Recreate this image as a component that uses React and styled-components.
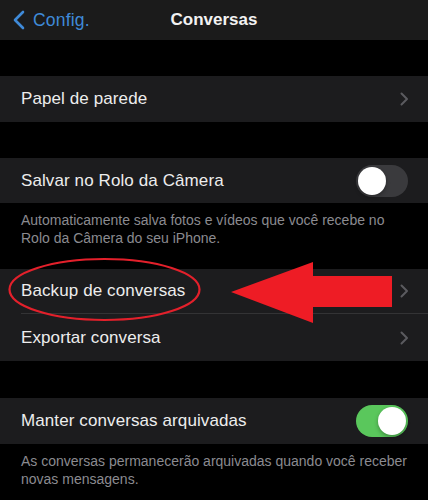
import React from "react";
import styled, { createGlobalStyle } from "styled-components";

const Global = createGlobalStyle`
  html, body { margin: 0; padding: 0; background: #000; }
  body { font-family: "Liberation Sans", Arial, sans-serif; -webkit-font-smoothing: antialiased; }
`;

const Page = styled.div`
  position: relative;
  width: 428px;
  height: 500px;
  overflow: hidden;
  background: #000;
`;

const NavBar = styled.div`
  height: 40px;
  background: #1b1b1b;
  display: grid;
  grid-template-columns: 1fr auto 1fr;
  align-items: center;
`;

const Back = styled.div`
  display: flex;
  align-items: center;
  gap: 8px;
  padding-left: 12px;
  color: #3f8ad8;
  font-size: 17.5px;
  letter-spacing: 0.2px;
`;

const Title = styled.div`
  color: #f2f2f2;
  font-size: 17px;
  font-weight: 700;
`;

const Gap = styled.div`
  height: ${(p) => p.$h}px;
`;

const Group = styled.div`
  background: #1c1c1e;
`;

const Row = styled.div`
  height: ${(p) => p.$h || 46}px;
  display: flex;
  align-items: center;
  justify-content: space-between;
  padding: 0 21px;
  color: #ededed;
  font-size: 17px;
  letter-spacing: 0.1px;
  box-sizing: border-box;
`;

const Separator = styled.div`
  height: 1px;
  margin-left: 21px;
  background: #333335;
`;

const Footer = styled.div`
  box-sizing: border-box;
  height: ${(p) => p.$h}px;
  padding: 9px 21px 0;
  color: #8b8b90;
  font-size: 14px;
  line-height: 17.5px;
`;

const Track = styled.div`
  width: 52px;
  height: 32px;
  border-radius: 16px;
  background: ${(p) => (p.$on ? "#5ac75c" : "#3a3a3d")};
  display: flex;
  align-items: center;
  justify-content: ${(p) => (p.$on ? "flex-end" : "flex-start")};
  padding: 2px;
  box-sizing: border-box;
  margin-right: -1px;
`;

const Knob = styled.div`
  width: 28px;
  height: 28px;
  border-radius: 50%;
  background: #fff;
  box-shadow: 0 2px 4px rgba(0, 0, 0, 0.3);
`;

const Overlay = styled.svg`
  position: absolute;
  left: 0;
  top: 0;
  pointer-events: none;
`;

const Chevron = () => (
  <svg width="9" height="14" viewBox="0 0 9 14" style={{ marginRight: -2 }}>
    <path d="M1.5 1.5 L7 7 L1.5 12.5" fill="none" stroke="#5b5b5f" strokeWidth="2" strokeLinecap="round" strokeLinejoin="round" />
  </svg>
);

const BackChevron = () => (
  <svg width="13" height="20" viewBox="0 0 13 20">
    <path d="M11 2 L3 10 L11 18" fill="none" stroke="#3f8ad8" strokeWidth="2.6" strokeLinecap="round" strokeLinejoin="round" />
  </svg>
);

const Toggle = ({ on }) => (
  <Track $on={on}>
    <Knob />
  </Track>
);

export default function App() {
  return (
    <Page>
      <Global />
      <NavBar>
        <Back>
          <BackChevron />
          <span>Config.</span>
        </Back>
        <Title>Conversas</Title>
        <div />
      </NavBar>
      <Gap $h={36} />
      <Group>
        <Row>
          <span>Papel de parede</span>
          <Chevron />
        </Row>
      </Group>
      <Gap $h={36} />
      <Group>
        <Row $h={45}>
          <span>Salvar no Rolo da Câmera</span>
          <Toggle on={false} />
        </Row>
      </Group>
      <Footer $h={66}>
        Automaticamente salva fotos e vídeos que você recebe no Rolo da Câmera do seu iPhone.
      </Footer>
      <Group>
        <Row $h={44}>
          <span>Backup de conversas</span>
          <Chevron />
        </Row>
        <Separator />
        <Row $h={47}>
          <span>Exportar conversa</span>
          <Chevron />
        </Row>
      </Group>
      <Gap $h={37} />
      <Group>
        <Row>
          <span>Manter conversas arquivadas</span>
          <Toggle on />
        </Row>
      </Group>
      <Footer $h={60}>
        As conversas permanecerão arquivadas quando você receber novas mensagens.
      </Footer>
      <Overlay width="428" height="500" viewBox="0 0 428 500">
        <ellipse cx="104.5" cy="289.5" rx="95" ry="30.5" fill="none" stroke="#e3202b" strokeWidth="2.2" />
        <polygon points="231,292 313,262 313,276 392,276 392,307 313,307 313,323" fill="#ee1c25" />
      </Overlay>
    </Page>
  );
}
